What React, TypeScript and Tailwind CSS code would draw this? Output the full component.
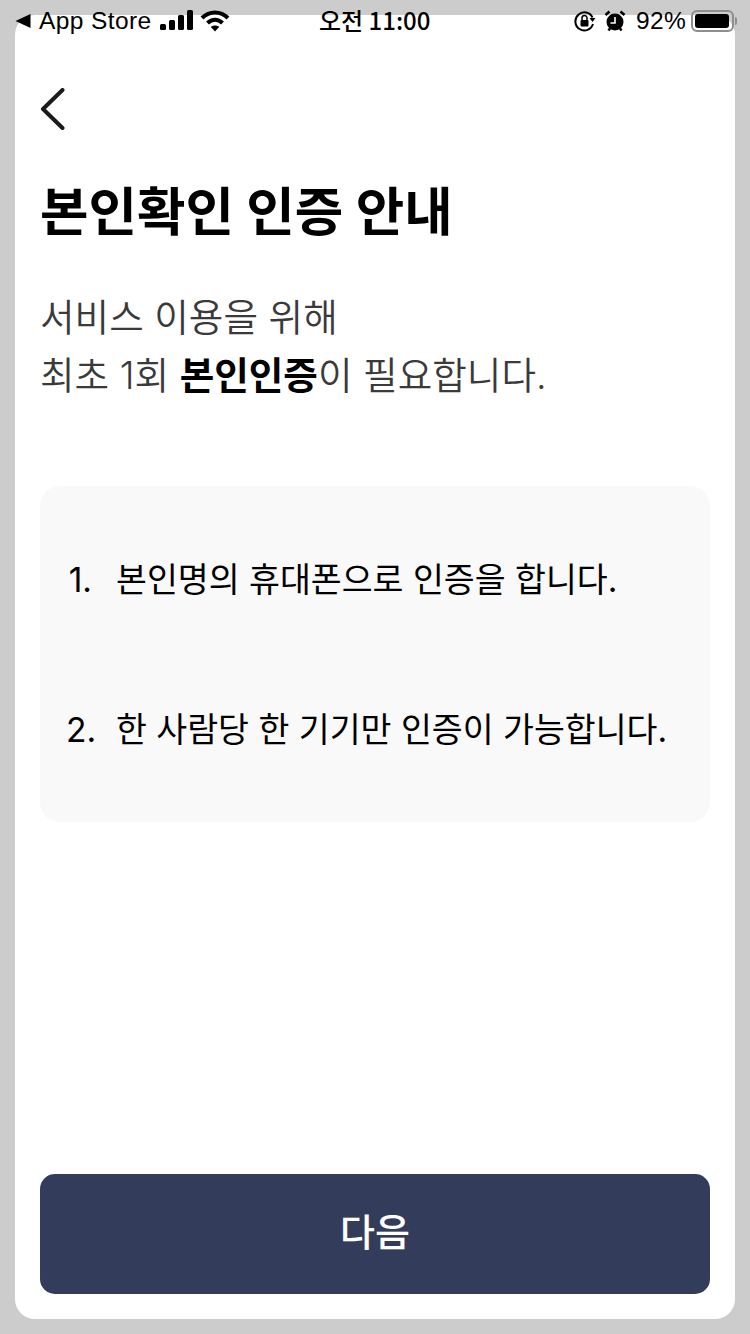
const font = "font-['Inter','Noto_Sans_CJK_KR',sans-serif]";

const StatusBar = () => (
  <div className="absolute left-0 right-0 top-0 z-10 flex h-[42px] items-center justify-between pl-[15px] pr-[13px] text-[24px] leading-none text-black">
    <div className="flex items-center">
      <svg width="16" height="16" viewBox="0 0 16 16" className="mr-[8px]">
        <path d="M0.5 8 L15.5 1 V15 Z" fill="#000" />
      </svg>
      <span className="font-['Liberation_Sans',sans-serif] text-[24.5px] tracking-[0.4px]">App Store</span>
      <svg width="34" height="22" viewBox="0 0 34 22" className="ml-[7px]">
        <rect x="1" y="14" width="6" height="6" rx="1.5" fill="#000" />
        <rect x="10" y="10" width="6" height="10" rx="1.5" fill="#000" />
        <rect x="19" y="5" width="6" height="15" rx="1.5" fill="#000" />
        <rect x="28" y="0" width="6" height="20" rx="1.5" fill="#000" />
      </svg>
      <svg width="30" height="22" viewBox="0 0 30 22" className="ml-[7px]">
        <path d="M2 8 C9.5 0.5 20.5 0.5 28 8" fill="none" stroke="#000" strokeWidth="4" />
        <path d="M7.5 13 C12 8.5 18 8.5 22.5 13" fill="none" stroke="#000" strokeWidth="4" />
        <path d="M15 21.5 L10.8 17 C13 15 17 15 19.2 17 Z" fill="#000" />
      </svg>
    </div>
    <span className="absolute left-[319px] top-[6px] font-['Noto_Sans_CJK_KR',sans-serif] text-[24px] font-medium leading-[27px]">
      오전 11:00
    </span>
    <div className="flex items-center">
      <svg width="22" height="22" viewBox="0 0 22 22" className="mr-[8px]">
        <path d="M18.5 7.5 A9 9 0 1 0 19 14" fill="none" stroke="#000" strokeWidth="2" />
        <path d="M15.5 8 L21.5 8 L18.5 12 Z" fill="#000" />
        <rect x="6.5" y="10" width="8" height="6.5" rx="1" fill="#000" />
        <path d="M8 10 V8 A2.5 2.5 0 0 1 13 8 V10" fill="none" stroke="#000" strokeWidth="1.5" />
      </svg>
      <svg width="22" height="22" viewBox="0 0 22 22" className="mr-[10px]">
        <circle cx="11" cy="12" r="8.5" fill="#000" />
        <path d="M1.5 5 L5.5 1.5 M20.5 5 L16.5 1.5 M4.5 20.5 L6 18.5 M17.5 20.5 L16 18.5" stroke="#000" strokeWidth="2.5" />
        <path d="M11 7 V13 H6.5" fill="none" stroke="#fff" strokeWidth="1.6" />
      </svg>
      <span className="font-['Liberation_Sans',sans-serif] text-[24.5px] tracking-[0.3px]">92%</span>
      <div className="ml-[5px] flex items-center">
        <div className="flex h-[22px] w-[43px] items-center rounded-[6px] border-2 border-[#8e8e8e] p-[2px]">
          <div className="h-full w-[34px] rounded-[3px] bg-black" />
        </div>
        <div className="ml-[1px] h-[8px] w-[2px] rounded-r-sm bg-[#8e8e8e]" />
      </div>
    </div>
  </div>
);

const App = () => {
  return (
    <div className={`relative h-[1334px] w-[750px] overflow-hidden bg-[#cccccc] p-[15px] ${font}`}>
      <StatusBar />
      <div className="flex h-[1304px] w-[720px] flex-col rounded-[20px] bg-white px-[25px] pb-[25px]">
        <button type="button" className="mt-[73px] h-[42px] w-[25px] shrink-0">
          <svg width="25" height="42" viewBox="0 0 25 42">
            <path d="M22.5 2 L3 21 L22.5 40" fill="none" stroke="#1a1a1a" strokeWidth="4" strokeLinecap="round" strokeLinejoin="round" />
          </svg>
        </button>

        <h1 className="mt-[50px] text-[52.7px] font-bold leading-[64px] text-black">본인확인 인증 안내</h1>

        <p className="mt-[45px] text-[37.6px] font-[350] leading-[58px] text-[#3a3a3a]">
          서비스 이용을 위해
          <br />
          최초 1회 <strong className="font-bold text-black">본인인증</strong>이 필요합니다.
        </p>

        <ol className="mt-[81px] flex h-[336px] flex-col rounded-[20px] bg-[#f9f9f9] pl-[26px] text-[33.6px] leading-[40px] text-black">
          <li className="mt-[74px] flex">
            <span className="w-[50px] pr-[24px] text-right">1.</span>본인명의 휴대폰으로 인증을 합니다.
          </li>
          <li className="mt-[110px] flex">
            <span className="w-[50px] pr-[24px] text-right">2.</span>한 사람당 한 기기만 인증이 가능합니다.
          </li>
        </ol>

        <button
          type="button"
          className="mt-auto h-[120px] w-full shrink-0 rounded-[15px] bg-[#333c5a] pb-[4px] text-[38px] font-medium text-white"
        >
          다음
        </button>
      </div>
    </div>
  );
};

export default App;
